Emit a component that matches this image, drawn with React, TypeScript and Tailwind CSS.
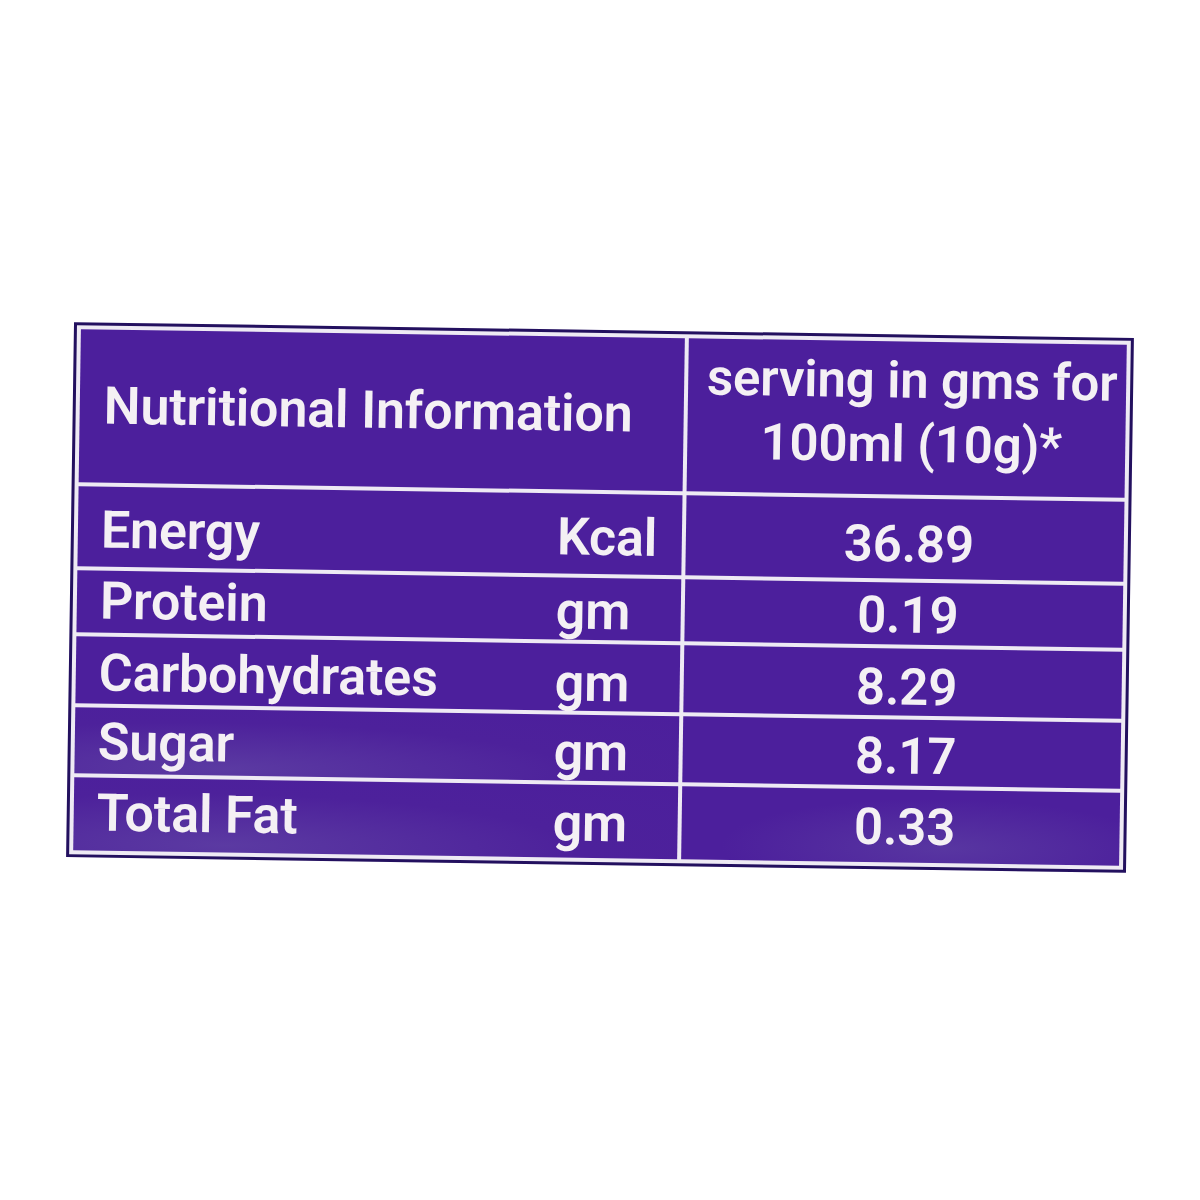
import React from "react";

const rows = [
  { name: "Energy", unit: "Kcal", value: "36.89", pb: "pb-[10px]" },
  { name: "Protein", unit: "gm", value: "0.19", pb: "pb-[5px]" },
  { name: "Carbohydrates", unit: "gm", value: "8.29", pb: "pb-[4px]" },
  { name: "Sugar", unit: "gm", value: "8.17", pb: "pb-[5px]" },
  { name: "Total Fat", unit: "gm", value: "0.33", pb: "pb-[11px]" },
];

export default function App() {
  return (
    <div className="w-full h-[1200px] bg-white overflow-hidden pt-[330px] pl-[70px] font-['Roboto',_sans-serif] font-semibold tracking-[-0.01em] text-[#f4f0f4]">
      <div className="w-[1060px] rotate-[0.85deg] border-[3px] border-[#23105f] bg-[#eeeaf4] p-[4px]">
        <div className="grid grid-cols-[604px_438px] grid-rows-[153px_80px_62px_67px_66px_73px] gap-[4px]">
          <div className="bg-[#4c1f9c] flex items-center pl-[24px] text-[52px] leading-none">
            Nutritional Information
          </div>
          <div className="bg-[#4c1f9c] flex flex-col items-center justify-center pb-[12px] pl-[10px] text-[51px] leading-[64px]">
            <div>serving in gms for</div>
            <div>100ml (10g)*</div>
          </div>
          {rows.map((r, i) => (
            <React.Fragment key={r.name}>
              <div
                className={
                  "flex items-end text-[52px] leading-none " +
                  r.pb +
                  (i >= 3
                    ? " bg-[radial-gradient(ellipse_at_25%_90%,#5b3aa2_0%,#4d219b_55%,#4c1f9c_100%)]"
                    : " bg-[#4c1f9c]")
                }
              >
                <div className="w-[479px] pl-[23px]">{r.name}</div>
                <div className={i === 0 ? "" : "translate-y-[3px]"}>{r.unit}</div>
              </div>
              <div
                className={
                  "flex items-end justify-center pl-[8px] text-[51px] leading-none " +
                  r.pb +
                  (i === 4
                    ? " bg-[radial-gradient(ellipse_at_60%_80%,#5836a1_0%,#4c1f9c_60%)]"
                    : " bg-[#4c1f9c]")
                }
              >
                <div className="translate-y-[1px]">{r.value}</div>
              </div>
            </React.Fragment>
          ))}
        </div>
      </div>
    </div>
  );
}
